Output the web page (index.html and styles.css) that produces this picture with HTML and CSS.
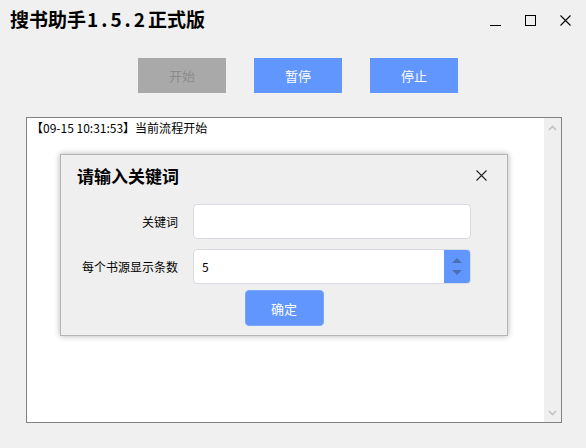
FILE: index.html
```html
<!DOCTYPE html>
<html lang="zh-CN">
<head>
  <meta charset="UTF-8" />
  <title>搜书助手1.5.2正式版</title>
  <link rel="stylesheet" href="styles.css">
</head>
<body>
  <div class="window">
    <div class="titlebar">
      <h1 class="app-title">搜书助手<span class="ver">1.5.2</span>正式版</h1>
      <div class="win-controls">
        <span class="ctl ctl-min"></span>
        <span class="ctl ctl-max"></span>
        <svg class="ctl ctl-close" width="11" height="11" viewBox="0 0 11 11">
          <path d="M0.5 0.5 L10.5 10.5 M10.5 0.5 L0.5 10.5" stroke="#000" stroke-width="1.1" fill="none"/>
        </svg>
      </div>
    </div>

    <div class="toolbar">
      <button class="btn btn-disabled">开始</button>
      <button class="btn btn-blue">暂停</button>
      <button class="btn btn-blue">停止</button>
    </div>

    <div class="log">
      <div class="log-text">【09-15 10:31:53】当前流程开始</div>
      <div class="scrollbar">
        <svg width="9" height="6" viewBox="0 0 9 6"><path d="M1 5 L4.5 1.5 L8 5" stroke="#c2c2c2" stroke-width="1.6" fill="none"/></svg>
        <svg width="9" height="6" viewBox="0 0 9 6"><path d="M1 1 L4.5 4.5 L8 1" stroke="#c2c2c2" stroke-width="1.6" fill="none"/></svg>
      </div>

      <!-- 关键词弹窗 -->
      <div class="dialog">
        <div class="dialog-head">
          <h2>请输入关键词</h2>
          <svg width="11" height="11" viewBox="0 0 11 11">
            <path d="M0.5 0.5 L10.5 10.5 M10.5 0.5 L0.5 10.5" stroke="#222" stroke-width="1.1" fill="none"/>
          </svg>
        </div>
        <div class="form">
          <label>关键词</label>
          <div class="field"></div>
          <label>每个书源显示条数</label>
          <div class="field spin">
            <span class="spin-val">5</span>
            <span class="spin-btns">
              <svg width="10" height="5" viewBox="0 0 10 5"><path d="M0 5 L5 0 L10 5 Z" fill="#4b6fb5"/></svg>
              <svg width="10" height="5" viewBox="0 0 10 5"><path d="M0 0 L5 5 L10 0 Z" fill="#4b6fb5"/></svg>
            </span>
          </div>
        </div>
        <div class="dialog-foot">
          <button class="btn-ok">确定</button>
        </div>
      </div>
    </div>
  </div>
</body>
</html>
```

FILE: styles.css
```css
body {
  margin: 0;
  padding: 0;
  background: #f0f0f0;
  font-family: "Noto Sans CJK SC", "Noto Sans", sans-serif;
  color: #000;
}
.window {
  width: 586px;
  height: 448px;
  overflow: hidden;
}
.titlebar {
  height: 40px;
  display: flex;
  align-items: center;
  justify-content: space-between;
}
.app-title {
  margin: 0 0 2px 10px;
  font-size: 19px;
  font-weight: bold;
  line-height: 20px;
}
.ver {
  letter-spacing: 3px;
  margin-left: 1px;
}
.win-controls {
  display: flex;
  align-items: center;
  gap: 24px;
  margin-right: 15px;
}
.ctl-min {
  width: 11px;
  height: 1px;
  background: #000;
  margin-top: 10px;
}
.ctl-max {
  width: 9px;
  height: 9px;
  border: 1px solid #000;
}
.toolbar {
  display: flex;
  gap: 28px;
  padding: 18px 0 0 138px;
}
.btn {
  width: 88px;
  height: 35px;
  border: none;
  font-family: inherit;
  font-size: 13px;
  padding: 0;
}
.btn-disabled {
  background: #a9a9a9;
  color: #8b8b8b;
}
.btn-blue {
  background: #6196fe;
  color: #fff;
}
.log {
  position: relative;
  margin: 24px 0 0 26px;
  width: 534px;
  height: 304px;
  border: 1px solid #828282;
  background: #fff;
  display: flex;
}
.log-text {
  flex: 1;
  font-size: 12px;
  line-height: 16px;
  padding: 2px 4px;
}
.scrollbar {
  width: 17px;
  background: #efefef;
  display: flex;
  flex-direction: column;
  justify-content: space-between;
  align-items: center;
  padding: 7px 0 6px;
  box-sizing: border-box;
}
.dialog {
  position: absolute;
  left: 33px;
  top: 36px;
  width: 446px;
  background: #efefef;
  border: 1px solid #b5b5b5;
  box-shadow: 0 0 6px rgba(0, 0, 0, 0.3);
  padding-bottom: 9px;
}
.dialog-head {
  height: 40px;
  display: flex;
  align-items: center;
  justify-content: space-between;
  padding: 0 20px 0 16px;
}
.dialog-head h2 {
  margin: 0;
  font-size: 17px;
  font-weight: bold;
}
.form {
  display: grid;
  grid-template-columns: 117px 278px;
  column-gap: 15px;
  row-gap: 10px;
  margin-top: 9px;
  font-size: 12px;
}
.form label {
  text-align: right;
  align-self: center;
}
.field {
  height: 33px;
  background: #fff;
  border: 1px solid #d7dae0;
  border-radius: 4px;
}
.spin {
  display: flex;
  align-items: center;
  overflow: hidden;
}
.spin-val {
  flex: 1;
  padding-left: 8px;
}
.spin-btns {
  width: 26px;
  height: 100%;
  background: #6196fe;
  display: flex;
  flex-direction: column;
  align-items: center;
  justify-content: center;
  gap: 7px;
}
.spin-btns svg {
  display: block;
}
.dialog-foot {
  display: flex;
  justify-content: center;
  margin-top: 6px;
}
.btn-ok {
  width: 79px;
  height: 36px;
  background: #6196fe;
  border: 1px solid #7aa6fc;
  border-radius: 4px;
  color: #fff;
  font-family: inherit;
  font-size: 13px;
}
```
